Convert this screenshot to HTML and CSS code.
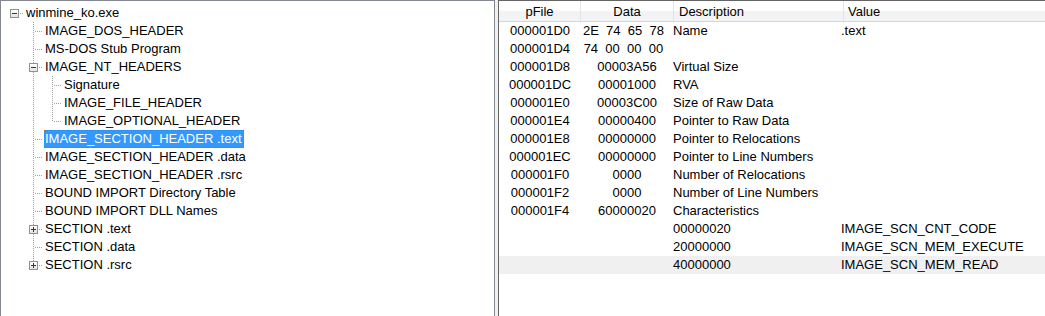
FILE: index.html
```html
<!DOCTYPE html>
<html lang="en">
<head>
    <meta charset="UTF-8">
    <title>PE Viewer - winmine_ko.exe</title>
    <link rel="stylesheet" href="styles.css">
</head>
<body>
    <div class="window">
        <div class="tree">
            <div class="node">
                <span class="gut stub"><span class="box"></span></span>
                <span class="label">winmine_ko.exe</span>
            </div>
            <div class="node">
                <span class="gut"></span><span class="gut tee"></span>
                <span class="label">IMAGE_DOS_HEADER</span>
            </div>
            <div class="node">
                <span class="gut"></span><span class="gut tee"></span>
                <span class="label">MS-DOS Stub Program</span>
            </div>
            <div class="node">
                <span class="gut"></span><span class="gut tee"><span class="box"></span></span>
                <span class="label">IMAGE_NT_HEADERS</span>
            </div>
            <div class="node">
                <span class="gut"></span><span class="gut line"></span><span class="gut tee"></span>
                <span class="label">Signature</span>
            </div>
            <div class="node">
                <span class="gut"></span><span class="gut line"></span><span class="gut tee"></span>
                <span class="label">IMAGE_FILE_HEADER</span>
            </div>
            <div class="node">
                <span class="gut"></span><span class="gut line"></span><span class="gut ell"></span>
                <span class="label">IMAGE_OPTIONAL_HEADER</span>
            </div>
            <div class="node">
                <span class="gut"></span><span class="gut tee"></span>
                <span class="label selected">IMAGE_SECTION_HEADER .text</span>
            </div>
            <div class="node">
                <span class="gut"></span><span class="gut tee"></span>
                <span class="label">IMAGE_SECTION_HEADER .data</span>
            </div>
            <div class="node">
                <span class="gut"></span><span class="gut tee"></span>
                <span class="label">IMAGE_SECTION_HEADER .rsrc</span>
            </div>
            <div class="node">
                <span class="gut"></span><span class="gut tee"></span>
                <span class="label">BOUND IMPORT Directory Table</span>
            </div>
            <div class="node">
                <span class="gut"></span><span class="gut tee"></span>
                <span class="label">BOUND IMPORT DLL Names</span>
            </div>
            <div class="node">
                <span class="gut"></span><span class="gut tee"><span class="box plus"></span></span>
                <span class="label">SECTION .text</span>
            </div>
            <div class="node">
                <span class="gut"></span><span class="gut tee"></span>
                <span class="label">SECTION .data</span>
            </div>
            <div class="node">
                <span class="gut"></span><span class="gut ell"><span class="box plus"></span></span>
                <span class="label">SECTION .rsrc</span>
            </div>
        </div>

        <div class="splitter"></div>

        <div class="list">
            <div class="list-header">
                <div class="col center">pFile</div>
                <div class="col center">Data</div>
                <div class="col desc">Description</div>
                <div class="col value">Value</div>
            </div>

            <div class="row"><span class="center">000001D0</span><span class="center hex">2E  74  65  78  </span><span>Name</span><span class="val">.text</span></div>
            <div class="row"><span class="center">000001D4</span><span class="center hex">74  00  00  00  </span><span></span><span class="val"></span></div>
            <div class="row"><span class="center">000001D8</span><span class="center">00003A56</span><span>Virtual Size</span><span class="val"></span></div>
            <div class="row"><span class="center">000001DC</span><span class="center">00001000</span><span>RVA</span><span class="val"></span></div>
            <div class="row"><span class="center">000001E0</span><span class="center">00003C00</span><span>Size of Raw Data</span><span class="val"></span></div>
            <div class="row"><span class="center">000001E4</span><span class="center">00000400</span><span>Pointer to Raw Data</span><span class="val"></span></div>
            <div class="row"><span class="center">000001E8</span><span class="center">00000000</span><span>Pointer to Relocations</span><span class="val"></span></div>
            <div class="row"><span class="center">000001EC</span><span class="center">00000000</span><span>Pointer to Line Numbers</span><span class="val"></span></div>
            <div class="row"><span class="center">000001F0</span><span class="center">0000</span><span>Number of Relocations</span><span class="val"></span></div>
            <div class="row"><span class="center">000001F2</span><span class="center">0000</span><span>Number of Line Numbers</span><span class="val"></span></div>
            <div class="row"><span class="center">000001F4</span><span class="center">60000020</span><span>Characteristics</span><span class="val"></span></div>
            <div class="row"><span></span><span></span><span>00000020</span><span class="val">IMAGE_SCN_CNT_CODE</span></div>
            <div class="row"><span></span><span></span><span>20000000</span><span class="val">IMAGE_SCN_MEM_EXECUTE</span></div>
            <div class="row hot"><span></span><span></span><span>40000000</span><span class="val">IMAGE_SCN_MEM_READ</span></div>
        </div>
    </div>
</body>
</html>
```

FILE: styles.css
```css
html, body {
    margin: 0;
    padding: 0;
    background: #fff;
}

body {
    font-family: "Liberation Sans", Arial, sans-serif;
    font-size: 13px;
    color: #000;
    overflow: hidden;
}

.window {
    display: flex;
    width: 1045px;
    height: 320px;
}

/* left: tree view */
.tree {
    width: 493px;
    border: 1px solid #828790;
    border-bottom: none;
    padding-top: 3px;
    background: #fff;
}

.node {
    display: flex;
    align-items: center;
    height: 18px;
    line-height: 18px;
    padding-left: 4px;
    white-space: nowrap;
}

.gut {
    position: relative;
    flex: none;
    width: 19px;
    height: 18px;
    background-repeat: no-repeat;
}

/* dotted connectors drawn as 1px pattern strips */
.line {
    background-image: repeating-linear-gradient(to bottom, #a0a0a0 0 1px, transparent 1px 2px);
    background-size: 1px 18px;
    background-position: 9px 0;
}

.tee {
    background-image:
        repeating-linear-gradient(to bottom, #a0a0a0 0 1px, transparent 1px 2px),
        repeating-linear-gradient(to right, #a0a0a0 0 1px, transparent 1px 2px);
    background-size: 1px 18px, 8px 1px;
    background-position: 9px 0, 11px 9px;
}

.ell {
    background-image:
        repeating-linear-gradient(to bottom, #a0a0a0 0 1px, transparent 1px 2px),
        repeating-linear-gradient(to right, #a0a0a0 0 1px, transparent 1px 2px);
    background-size: 1px 9px, 8px 1px;
    background-position: 9px 0, 11px 9px;
}

.stub {
    background-image: repeating-linear-gradient(to right, #a0a0a0 0 1px, transparent 1px 2px);
    background-size: 4px 1px;
    background-position: 15px 9px;
}

/* expand / collapse box */
.box {
    position: absolute;
    left: 5px;
    top: 5px;
    width: 7px;
    height: 7px;
    border: 1px solid #919191;
    background: linear-gradient(#fff, #e2e2e2);
}

.box::before {
    content: "";
    position: absolute;
    left: 1px;
    top: 3px;
    width: 5px;
    height: 1px;
    background: #1e3a6e;
}

.box.plus::after {
    content: "";
    position: absolute;
    left: 3px;
    top: 1px;
    width: 1px;
    height: 5px;
    background: #1e3a6e;
}

.label {
    margin-left: 1px;
    padding: 0 2px 0 1px;
    height: 18px;
    box-sizing: border-box;
}

.selected {
    background: #3399ff;
    color: #fff;
    outline: 1px dotted #cc6600;
    outline-offset: -1px;
}

.splitter {
    width: 3px;
    background: #f0f0f0;
}

/* right: list view */
.list {
    flex: 1;
    border-left: 1px solid #646464;
    border-top: 1px solid #646464;
    background: #fff;
}

.list-header {
    display: grid;
    grid-template-columns: 82px 93px 170px 1fr;
    height: 20px;
    line-height: 22px;
    border-bottom: 1px solid #d5d5d5;
    background: linear-gradient(#ffffff 0%, #ffffff 45%, #f1f2f4 55%, #f3f4f6 100%);
}

.col {
    border-right: 1px solid #e3e4e6;
    white-space: nowrap;
}

.col:last-child {
    border-right: none;
}

.col.desc {
    padding-left: 5px;
}

.col.value {
    padding-left: 4px;
}

.row {
    display: grid;
    grid-template-columns: 82px 92px 167px 1fr;
    height: 18px;
    line-height: 18px;
    white-space: nowrap;
}

.center {
    text-align: center;
}

.hex {
    white-space: pre;
}

.val {
    padding-left: 1px;
}

.hot {
    background: #f0f0f0;
}
```
